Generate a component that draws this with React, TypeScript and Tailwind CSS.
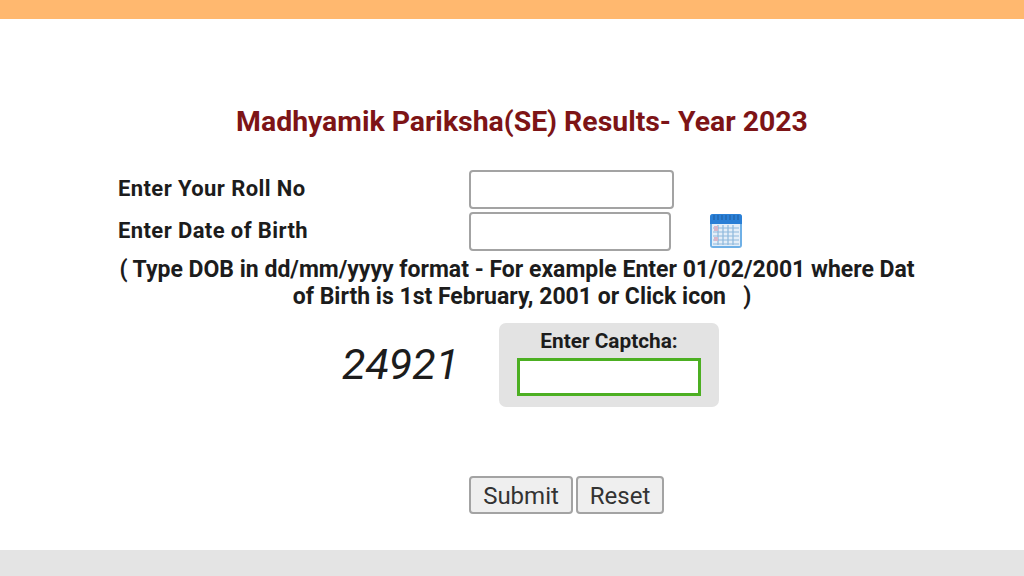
import React from 'react';

const CalendarIcon = () => (
  <svg width="34" height="36" viewBox="0 0 34 36">
    <rect x="1" y="1" width="32" height="34" rx="3" fill="#6fb0e6" />
    <rect x="3" y="11" width="28" height="22" fill="#e4eef8" />
    <path d="M1 11V4a3 3 0 0 1 3-3h26a3 3 0 0 1 3 3v7z" fill="#2a7fd6" />
    <path d="M5 2v5M9 2v5M13 2v5M17 2v5M21 2v5M25 2v5M29 2v5" stroke="#1f5f9f" strokeWidth="1" />
    <path d="M4 15h26M4 19h26M4 23h26M4 27h26M4 31h26M9 12v20M14 12v20M19 12v20M24 12v20" stroke="#8db8dc" strokeWidth="1.200" />
    <rect x="5" y="13" width="4" height="5" fill="#d9b6c8" />
    <rect x="5" y="24" width="4" height="4" fill="#d9b6c8" />
  </svg>
);

const App: React.FC = () => {
  return (
    <div className="w-[1024px] h-[576px] bg-white flex flex-col overflow-hidden font-['Roboto',_sans-serif] text-[#1c1c1c]">
      <div className="h-[19px] bg-[#ffb86f] shrink-0"></div>

      <div className="flex-1 flex flex-col">
        <h1 className="mt-[86px] text-center text-[28.400px] leading-[34px] font-bold text-[#7d1416] pl-[20px]">
          Madhyamik Pariksha(SE) Results- Year 2023
        </h1>

        <div className="mt-[30px] ml-[118px] w-[798px]">
          <div className="flex items-center h-[40px]">
            <label className="w-[351px] text-[22px] leading-[26px] font-bold tracking-[0.4px]">Enter Your Roll No</label>
            <input type="text" className="w-[205px] h-[39px] bg-white border-2 border-[#a3a3a3] rounded-[4px]" />
          </div>
          <div className="flex items-center h-[44px]">
            <label className="w-[351px] text-[22px] leading-[26px] font-bold tracking-[0.4px]">Enter Date of Birth</label>
            <input type="text" className="w-[202px] h-[39px] bg-white border-2 border-[#a3a3a3] rounded-[4px]" />
            <div className="ml-[38px]"><CalendarIcon /></div>
          </div>
          <p className="text-[23px] leading-[27px] font-bold text-center whitespace-nowrap overflow-hidden mt-[3px]">
            ( Type DOB in dd/mm/yyyy format - For example Enter 01/02/2001 where Dat
            <br />
            <span className="ml-[10px]">of Birth is 1st February, 2001 or Click icon &nbsp; )</span>
          </p>
        </div>

        <div className="mt-[13px] flex items-center">
          <div className="ml-[342px] w-[157px] text-[43px] italic leading-none pb-[2px]">24921</div>
          <div className="w-[220px] h-[84px] bg-[#e3e3e3] rounded-[7px] flex flex-col items-center pt-[6px]">
            <span className="text-[20.800px] leading-[24px] font-bold">Enter Captcha:</span>
            <input type="text" className="mt-[5px] w-[184px] h-[38px] bg-white border-[3px] border-[#4caf22]" />
          </div>
        </div>

        <div className="mt-[69px] ml-[469px] flex gap-[3px]">
          <button className="w-[104px] h-[38px] pb-[3px] bg-[#efefef] border-2 border-[#a3a3a3] rounded-[4px] text-[24px] text-[#333333]">Submit</button>
          <button className="w-[88px] h-[38px] pb-[3px] bg-[#efefef] border-2 border-[#a3a3a3] rounded-[4px] text-[24px] text-[#333333]">Reset</button>
        </div>
      </div>

      <div className="h-[26px] bg-[#e4e4e4] shrink-0"></div>
    </div>
  );
};

export default App;
